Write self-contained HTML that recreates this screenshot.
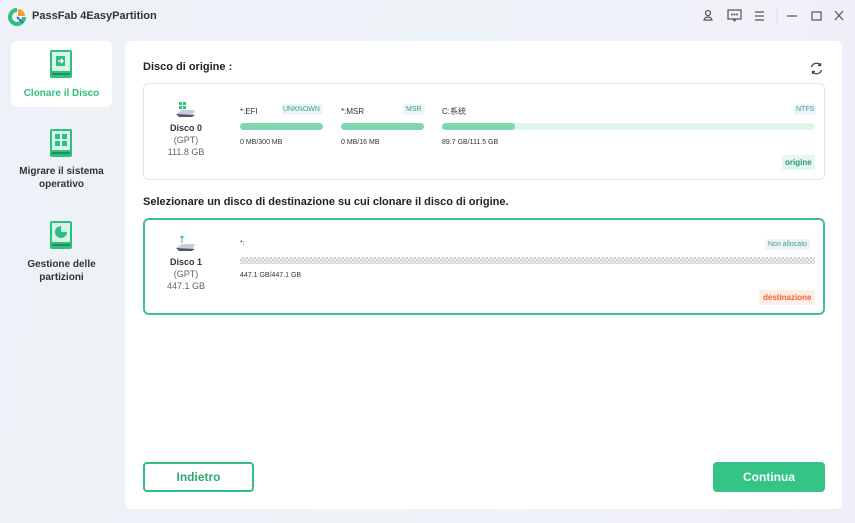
<!DOCTYPE html>
<html><head><meta charset="utf-8"><style>
*{margin:0;padding:0;box-sizing:border-box}
body{width:855px;height:523px;overflow:hidden;font-family:"Liberation Sans","Noto Sans CJK SC",sans-serif;background:linear-gradient(100deg,#eef1f7 0%,#eef3f8 50%,#f1eef8 100%);position:relative;color:#222}
.abs{position:absolute}
.side{left:11px;top:41px;width:101px;height:66px;background:#fff;border-radius:6px}
.si{font-size:10px;font-weight:bold;text-align:center;line-height:13px;color:#333}
.main{left:125px;top:41px;width:717px;height:468px;background:#fff;border-radius:6px}
.box{border:1px solid #dfe3ec;border-radius:6px;background:#fff}
.bar{height:7px;border-radius:4px;background:#7fd6b1}
.sm{font-size:7px;color:#333}
.tag{font-size:7px;padding:2px 3px;background:#eef3fb;color:#3aa67a;border-radius:2px}
.btn{border-radius:4px;font-size:12px;font-weight:bold;text-align:center}
</style></head><body>
<svg class="abs" style="left:8px;top:8px" width="18" height="18" viewBox="0 0 18 18"><path d="M9 2a7 7 0 1 0 7 7" stroke="#2fbf7f" stroke-width="4" fill="none"/><path d="M10 1a7 7 0 0 1 7 7h-7z" fill="#f39c33"/><path d="M9 9l6 6" stroke="#3a6fd8" stroke-width="2"/></svg>
<div class="abs" style="left:32px;top:10px;font-size:11px;font-weight:bold;color:#333">PassFab 4EasyPartition</div>
<svg class="abs" style="left:700px;top:8px" width="150" height="16" viewBox="0 0 150 16" fill="none" stroke="#555" stroke-width="1.2">
<circle cx="8" cy="5" r="2.5"/><path d="M4 12a4 3 0 0 1 8 0z"/>
<rect x="28" y="2" width="13" height="9"/><path d="M33 11l1.5 2 1.5-2"/><circle cx="32" cy="6.5" r=".4"/><circle cx="34.5" cy="6.5" r=".4"/><circle cx="37" cy="6.5" r=".4"/>
<path d="M55 4h9M55 8h9M55 12h9"/><path d="M77 1v14" stroke="#ddd"/>
<path d="M87 8h10"/><rect x="112" y="4" width="9" height="8"/><path d="M135 3l8 9M143 3l-8 9"/></svg>
<div class="abs side"></div>
<svg class="abs" style="left:49px;top:49px" width="24" height="30" viewBox="0 0 24 30"><rect x="1" y="1" width="22" height="28" rx="2" fill="#2fbf7f"/><rect x="3" y="3" width="18" height="19" fill="#d9f4e8"/><rect x="7" y="7" width="9" height="10" fill="#2fbf7f"/><path d="M9 12h5m-2-2 2 2-2 2" stroke="#fff" stroke-width="1.3" fill="none"/><rect x="3" y="24" width="18" height="2" fill="#1f8f5d"/></svg>
<div class="abs si" style="left:11px;top:87px;width:101px;color:#2fbf7f">Clonare il Disco</div>
<svg class="abs" style="left:49px;top:128px" width="24" height="30" viewBox="0 0 24 30"><rect x="1" y="1" width="22" height="28" rx="2" fill="#2fbf7f"/><rect x="3" y="3" width="18" height="19" fill="#d9f4e8"/><rect x="6" y="6" width="5" height="5" fill="#2fbf7f"/><rect x="13" y="6" width="5" height="5" fill="#2fbf7f"/><rect x="6" y="13" width="5" height="5" fill="#2fbf7f"/><rect x="13" y="13" width="5" height="5" fill="#2fbf7f"/><rect x="3" y="24" width="18" height="2" fill="#1f8f5d"/></svg>
<div class="abs si" style="left:11px;top:165px;width:101px">Migrare il sistema<br>operativo</div>
<svg class="abs" style="left:49px;top:220px" width="24" height="30" viewBox="0 0 24 30"><rect x="1" y="1" width="22" height="28" rx="2" fill="#2fbf7f"/><rect x="3" y="3" width="18" height="19" fill="#d9f4e8"/><circle cx="12" cy="12" r="6" fill="#2fbf7f"/><path d="M12 12V6a6 6 0 0 1 6 6z" fill="#d9f4e8"/><rect x="3" y="24" width="18" height="2" fill="#1f8f5d"/></svg>
<div class="abs si" style="left:11px;top:258px;width:101px">Gestione delle<br>partizioni</div>

<div class="abs main"></div>
<div class="abs" style="left:143px;top:61px;font-size:11px;font-weight:bold">Disco di origine :</div>
<svg class="abs" style="left:809px;top:61px" width="15" height="15" viewBox="0 0 15 15" fill="none" stroke="#444" stroke-width="1.3"><path d="M2.5 6a5 5 0 0 1 9-1.5M12.5 9a5 5 0 0 1-9 1.5"/><path d="M11.5 2v2.5H9M3.5 13v-2.5H6"/></svg>
<div class="abs box" style="left:143px;top:83px;width:682px;height:97px"></div>
<svg class="abs" style="left:175px;top:101px" width="22" height="18" viewBox="0 0 22 18"><rect x="4" y="1" width="3" height="3" fill="#2fbf7f"/><rect x="8" y="1" width="3" height="3" fill="#2fbf7f"/><rect x="4" y="5" width="3" height="3" fill="#2fbf7f"/><rect x="8" y="5" width="3" height="3" fill="#2fbf7f"/><path d="M1 13l6-4h13l-2 5H4z" fill="#c9cbe0"/><path d="M1 13l3 3h13l3-2" fill="#556"/></svg>
<div class="abs" style="left:150px;top:122px;width:72px;text-align:center;font-size:9px;line-height:12px;color:#333"><b>Disco 0</b><br><span style="color:#666">(GPT)<br>111.8 GB</span></div>
<div class="abs sm" style="left:240px;top:107px;font-size:8px">*:EFI</div><div class="abs tag" style="left:282px;top:104px;width:41px;padding:2px 1px">UNKNOWN</div>
<div class="abs bar" style="left:240px;top:123px;width:83px"></div><div class="abs sm" style="left:240px;top:139px">0 MB/300 MB</div>
<div class="abs sm" style="left:341px;top:107px;font-size:8px">*:MSR</div><div class="abs tag" style="left:403px;top:104px">MSR</div>
<div class="abs bar" style="left:341px;top:123px;width:83px"></div><div class="abs sm" style="left:341px;top:139px">0 MB/16 MB</div>
<div class="abs sm" style="left:442px;top:106px;font-size:8px">C:系统</div><div class="abs tag" style="left:794px;top:104px;padding:2px 2px">NTFS</div>
<div class="abs bar" style="left:442px;top:123px;width:373px;background:#dff5eb"></div><div class="abs bar" style="left:442px;top:123px;width:73px"></div>
<div class="abs sm" style="left:442px;top:139px">89.7 GB/111.5 GB</div>
<div class="abs" style="left:782px;top:155px;font-size:8px;font-weight:bold;padding:3px 3px;background:#e6f7ef;color:#2a9a6a;border-radius:2px">origine</div>

<div class="abs" style="left:143px;top:196px;font-size:11px;font-weight:bold">Selezionare un disco di destinazione su cui clonare il disco di origine.</div>
<div class="abs" style="left:143px;top:218px;width:682px;height:97px;border:2px solid #3cc38a;border-radius:6px"></div>
<svg class="abs" style="left:175px;top:235px" width="22" height="18" viewBox="0 0 22 18"><path d="M7 1v7M5.5 3l1.5-2 1.5 2" stroke="#2fbf7f" fill="none"/><path d="M1 13l6-4h13l-2 5H4z" fill="#c9cbe0"/><path d="M1 13l3 3h13l3-2" fill="#556"/></svg>
<div class="abs" style="left:150px;top:256px;width:72px;text-align:center;font-size:9px;line-height:12px;color:#333"><b>Disco 1</b><br><span style="color:#666">(GPT)<br>447.1 GB</span></div>
<div class="abs sm" style="left:240px;top:240px">*:</div>
<div class="abs tag" style="left:765px;top:239px">Non allocato</div>
<div class="abs" style="left:240px;top:257px;width:575px;height:7px;background:repeating-conic-gradient(#cfcfcf 0 25%,#f2f2f2 0 50%) 0 0/4px 4px"></div>
<div class="abs sm" style="left:240px;top:272px">447.1 GB/447.1 GB</div>
<div class="abs" style="left:759px;top:290px;font-size:8px;font-weight:bold;padding:3px 4px;background:#fdeee8;color:#f06030;border-radius:2px">destinazione</div>

<div class="abs btn" style="left:143px;top:462px;width:111px;height:30px;border:2px solid #2fbf7f;color:#2fa872;line-height:27px">Indietro</div>
<div class="abs btn" style="left:713px;top:462px;width:112px;height:30px;background:#34c485;color:#fff;line-height:31px">Continua</div>
</body></html>
